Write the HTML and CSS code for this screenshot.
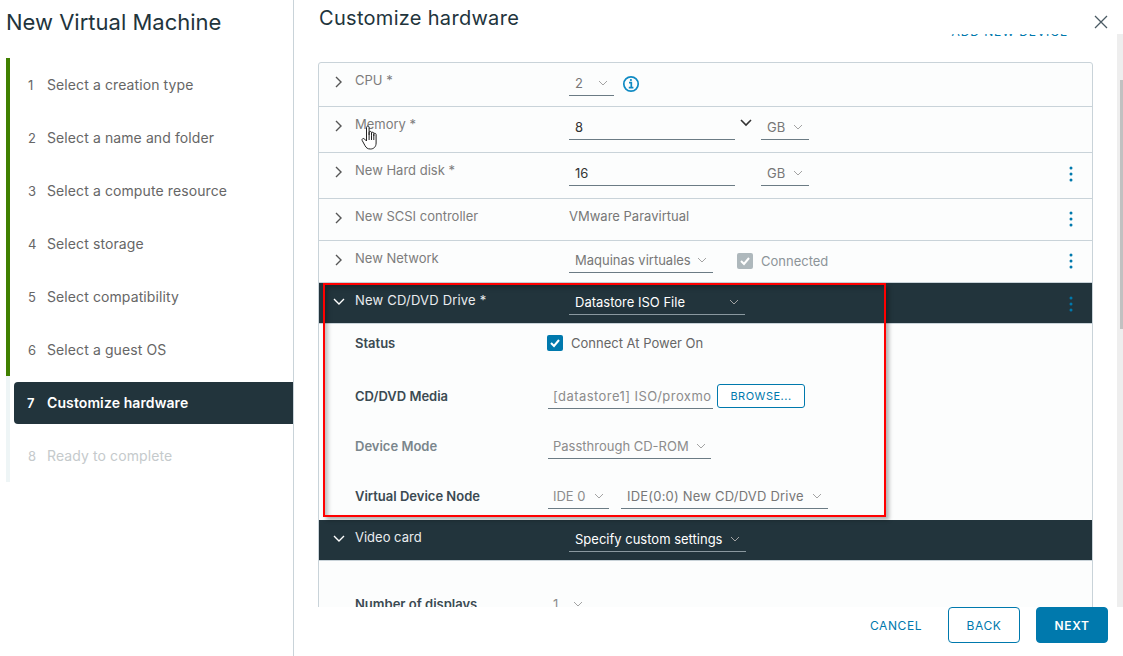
FILE: index.html
```html
<!DOCTYPE html>
<html>
<head>
  <meta charset="UTF-8">
  <title>New Virtual Machine</title>
  <link rel="stylesheet" href="styles.css">
</head>
<body>
<div class="app">

  <aside class="sidebar">
    <h1 class="wizard-title">New Virtual Machine</h1>
    <ol class="steps">
      <li class="step done"><span class="num">1</span>Select a creation type</li>
      <li class="step done"><span class="num">2</span>Select a name and folder</li>
      <li class="step done"><span class="num">3</span>Select a compute resource</li>
      <li class="step done"><span class="num">4</span>Select storage</li>
      <li class="step done"><span class="num">5</span>Select compatibility</li>
      <li class="step done"><span class="num">6</span>Select a guest OS</li>
      <li class="step active"><div class="pill"><span class="num">7</span>Customize hardware</div></li>
      <li class="step disabled"><span class="num">8</span>Ready to complete</li>
    </ol>
  </aside>

  <main class="main">
    <header class="header">
      <h2 class="page-title">Customize hardware</h2>
      <svg class="close" width="14" height="14" viewBox="0 0 14 14"><path d="M1 1l12 12M13 1L1 13" stroke="#4a5a63" stroke-width="1.3" fill="none"/></svg>
    </header>

    <div class="content">
      <div class="scroller">
        <div class="toolbar"><a class="add-link">ADD NEW DEVICE</a></div>
        <div class="table">

          <div class="row row-cpu">
            <svg class="chev" width="10" height="12" viewBox="0 0 10 12"><path d="M2 1l5 5-5 5" /></svg>
            <div class="label">CPU *</div>
            <div class="values">
              <div class="field w45"><span>2</span><svg class="caret" width="10" height="6" viewBox="0 0 10 6"><path d="M1 1l4 4 4-4" /></svg></div>
              <svg class="info" width="18" height="18" viewBox="0 0 18 18"><circle cx="9" cy="9" r="7.2" /><path d="M7 7.6h2.300v4.600M6.800 12.600h4.600" /><circle class="dot" cx="8.900" cy="5" r="1.100" /></svg>
            </div>
          </div>

          <div class="row">
            <svg class="chev" width="10" height="12" viewBox="0 0 10 12"><path d="M2 1l5 5-5 5" /></svg>
            <div class="label">Memory *</div>
            <div class="values">
              <div class="field w166 plain"><span>8</span></div>
              <svg class="spin" width="12" height="8" viewBox="0 0 12 8"><path d="M1 1l5 5 5-5" /></svg>
              <div class="field w48 gb"><span>GB</span><svg class="caret" width="10" height="6" viewBox="0 0 10 6"><path d="M1 1l4 4 4-4" /></svg></div>
            </div>
          </div>

          <div class="row">
            <svg class="chev" width="10" height="12" viewBox="0 0 10 12"><path d="M2 1l5 5-5 5" /></svg>
            <div class="label">New Hard disk *</div>
            <div class="values">
              <div class="field w166 plain"><span>16</span></div>
              <div class="field w48 gb nospin"><span>GB</span><svg class="caret" width="10" height="6" viewBox="0 0 10 6"><path d="M1 1l4 4 4-4" /></svg></div>
            </div>
            <svg class="kebab" width="4" height="16" viewBox="0 0 4 16"><circle cx="2" cy="2" r="1.500" /><circle cx="2" cy="8" r="1.500" /><circle cx="2" cy="14" r="1.500" /></svg>
          </div>

          <div class="row row-scsi">
            <svg class="chev" width="10" height="12" viewBox="0 0 10 12"><path d="M2 1l5 5-5 5" /></svg>
            <div class="label">New SCSI controller</div>
            <div class="values static">VMware Paravirtual</div>
            <svg class="kebab" width="4" height="16" viewBox="0 0 4 16"><circle cx="2" cy="2" r="1.500" /><circle cx="2" cy="8" r="1.500" /><circle cx="2" cy="14" r="1.500" /></svg>
          </div>

          <div class="row row-net">
            <svg class="chev" width="10" height="12" viewBox="0 0 10 12"><path d="M2 1l5 5-5 5" /></svg>
            <div class="label">New Network</div>
            <div class="values">
              <div class="field w144"><span>Maquinas virtuales</span><svg class="caret" width="10" height="6" viewBox="0 0 10 6"><path d="M1 1l4 4 4-4" /></svg></div>
              <span class="check grey"><svg width="12" height="10" viewBox="0 0 12 10"><path d="M2 5l3 3 5-6" /></svg></span>
              <span class="connected">Connected</span>
            </div>
            <svg class="kebab" width="4" height="16" viewBox="0 0 4 16"><circle cx="2" cy="2" r="1.500" /><circle cx="2" cy="8" r="1.500" /><circle cx="2" cy="14" r="1.500" /></svg>
          </div>

          <div class="row dark row-cd">
            <svg class="chev" width="12" height="10" viewBox="0 0 12 10"><path d="M1 2l5 5 5-5" /></svg>
            <div class="label">New CD/DVD Drive *</div>
            <div class="values">
              <div class="field w176"><span>Datastore ISO File</span><svg class="caret" width="10" height="6" viewBox="0 0 10 6"><path d="M1 1l4 4 4-4" /></svg></div>
            </div>
            <svg class="kebab" width="4" height="16" viewBox="0 0 4 16"><circle cx="2" cy="2" r="1.500" /><circle cx="2" cy="8" r="1.500" /><circle cx="2" cy="14" r="1.500" /></svg>
          </div>

          <div class="details">
            <div class="detail first">
              <div class="dlabel">Status</div>
              <span class="check status-check"><svg width="12" height="10" viewBox="0 0 12 10"><path d="M2 5l3 3 5-6" /></svg></span>
              <span class="connect-text">Connect At Power On</span>
            </div>
            <div class="detail">
              <div class="dlabel">CD/DVD Media</div>
              <div class="field w165 media iso"><span>[datastore1] ISO/proxmo</span></div>
              <button class="browse">BROWSE...</button>
            </div>
            <div class="detail">
              <div class="dlabel muted">Device Mode</div>
              <div class="field w163 media"><span>Passthrough CD-ROM</span><svg class="caret" width="10" height="6" viewBox="0 0 10 6"><path d="M1 1l4 4 4-4" /></svg></div>
            </div>
            <div class="detail">
              <div class="dlabel">Virtual Device Node</div>
              <div class="field w61 media"><span>IDE 0</span><svg class="caret" width="10" height="6" viewBox="0 0 10 6"><path d="M1 1l4 4 4-4" /></svg></div>
              <div class="field w207 node"><span>IDE(0:0) New CD/DVD Drive</span><svg class="caret" width="10" height="6" viewBox="0 0 10 6"><path d="M1 1l4 4 4-4" /></svg></div>
            </div>
          </div>

          <div class="row dark row-video">
            <svg class="chev" width="12" height="10" viewBox="0 0 12 10"><path d="M1 2l5 5 5-5" /></svg>
            <div class="label">Video card</div>
            <div class="values">
              <div class="field w177"><span>Specify custom settings</span><svg class="caret" width="10" height="6" viewBox="0 0 10 6"><path d="M1 1l4 4 4-4" /></svg></div>
            </div>
          </div>

          <div class="video-body">
            <div class="detail">
              <div class="dlabel">Number of displays</div>
              <div class="field w40 media noline"><span>1</span><svg class="caret" width="10" height="6" viewBox="0 0 10 6"><path d="M1 1l4 4 4-4" /></svg></div>
            </div>
          </div>
        </div>
      </div>
      <div class="scroll-track"><div class="scroll-thumb"></div></div>
    </div>

    <footer class="footer">
      <button class="btn link">CANCEL</button>
      <button class="btn outline">BACK</button>
      <button class="btn primary">NEXT</button>
    </footer>
  </main>

  <!-- annotation and mouse pointer, on top of the screenshot -->
  <div class="red-box"></div>
  <svg class="hand" width="18" height="25" viewBox="0 0 18 25">
    <path d="M5.500 16V2.600c0-2 2.600-2 2.600 0V10V7.600c0-1.600 2.400-1.600 2.400 0V10.500V8.400c0-1.600 2.300-1.600 2.300 0V11V9.400c0-1.500 2.300-1.500 2.300 0.200V18c0 3.800-2.400 6-5.600 6c-3 0-4.300-1.200-5.400-3.200L1.200 15.500c-.8-1.800 1.400-2.800 2.500-1.300z" fill="#fff" stroke="#222" stroke-width="1"/>
    <path d="M8.100 10v5M10.500 10.500V15M12.800 11v4" stroke="#222" stroke-width="1" fill="none"/>
  </svg>
</div>
</body>
</html>
```

FILE: styles.css
```css
* {
  box-sizing: border-box;
}
html, body {
  margin: 0;
  height: 100%;
  overflow: hidden;
}
body {
  background: #fff;
  color: #666;
  font-family: Inter, "Noto Sans", sans-serif;
  font-size: 13px;
}
.app {
  position: relative;
  display: flex;
  width: 1123px;
  height: 656px;
}

/* left side: wizard steps */
.sidebar {
  width: 294px;
  flex: none;
  border-right: 1px solid #c9d3d9;
}
.wizard-title {
  margin: 0;
  padding: 8px 0 0 6px;
  height: 58px;
  font-size: 22px;
  line-height: 28px;
  font-weight: 400;
  color: #22343c;
}
.steps {
  list-style: none;
  margin: 0 0 0 6px;
  padding: 0;
  font-size: 14px;
  letter-spacing: .1px;
}
.step {
  height: 53px;
  border-left: 4px solid #eef5f6;
  padding-left: 18px;
  display: flex;
  align-items: center;
}
.step.done {
  border-left-color: #408000;
}
.num {
  width: 19px;
  flex: none;
  font-size: 13px;
}
.step.disabled {
  color: #c5cacc;
}
.step.active {
  padding-left: 4px;
}
.pill {
  flex: 1;
  height: 42px;
  padding-left: 13px;
  background: #22343c;
  color: #fff;
  font-weight: 600;
  border-radius: 4px 0 0 4px;
  display: flex;
  align-items: center;
}
.pill .num {
  width: 20px;
}

/* right side */
.main {
  flex: 1;
  min-width: 0;
  display: flex;
  flex-direction: column;
}
.header {
  height: 34px;
  flex: none;
  padding: 4px 15px 0 25px;
  display: flex;
  justify-content: space-between;
}
.page-title {
  margin: 0;
  font-size: 20px;
  line-height: 28px;
  font-weight: 400;
  letter-spacing: .3px;
  color: #22343c;
}
.close {
  margin-top: 11px;
}
.content {
  flex: 1;
  min-height: 0;
  display: flex;
}
.scroller {
  flex: 1;
  min-width: 0;
  overflow: hidden;
  padding: 0 24px;
}
.toolbar {
  display: flow-root;
  height: 28px;
  text-align: right;
  padding-right: 25px;
}
.add-link {
  display: block;
  margin-top: -8px;
  line-height: 12px;
  font-size: 12px;
  letter-spacing: .9px;
  color: #0079ad;
}
.scroll-track {
  width: 6px;
  flex: none;
  background: #eee;
  padding: 46px 0 0 3px;
}
.scroll-thumb {
  height: 249px;
  background: #c1c1c1;
}
.table {
  border: 1px solid #c9d3d9;
  border-radius: 3px 3px 0 0;
  background: #fcfdfd;
}
.row {
  position: relative;
  display: flex;
  align-items: flex-start;
  height: 46px;
  padding-top: 8px;
  border-bottom: 1px solid #c9d3d9;
}
.row-cpu { height: 44px; }
.row-scsi { height: 42px; }
.row-net { height: 42px; padding-top: 7px; }
.row-cd { height: 41px; padding-top: 7px; }
.row-video { height: 41px; padding-top: 7px; }
.row-net .label,
.row-cd .label,
.row-video .label {
  margin-top: 1px;
}
.chev {
  flex: none;
  margin: 5px 0 0 15px;
  fill: none;
  stroke: #565656;
  stroke-width: 1.4;
}
.row-net .chev {
  margin-top: 6px;
}
.label {
  width: 214px;
  flex: none;
  margin-left: 11px;
  line-height: 18px;
  color: #7c7c7c;
}
.values {
  display: flex;
  align-items: center;
  color: #777;
}
.values.static {
  line-height: 18px;
}
.field {
  height: 25px;
  flex: none;
  display: flex;
  align-items: center;
  justify-content: space-between;
  padding: 0 6px;
  border-bottom: 1px solid #6b7b84;
  white-space: nowrap;
}
.caret {
  flex: none;
  fill: none;
  stroke: #a3a3a3;
  stroke-width: 1;
}
.values .plain { color: #333; }
.w40 { width: 40px; }
.w45 { width: 45px; }
.w48 { width: 48px; }
.w61 { width: 61px; }
.w144 { width: 144px; }
.w163 { width: 163px; }
.w165 { width: 165px; }
.w166 { width: 166px; }
.w176 { width: 176px; }
.w177 { width: 177px; }
.w207 { width: 207px; }
.info {
  margin-left: 8px;
  fill: none;
  stroke: #0f8ac3;
  stroke-width: 1.7;
}
.info .dot {
  fill: #0f8ac3;
  stroke: none;
}
.spin {
  margin: 4px 9px 0 5px;
  align-self: flex-start;
  fill: none;
  stroke: #333;
  stroke-width: 1.6;
}
.nospin {
  margin-left: 26px;
}
.kebab {
  position: absolute;
  right: 19px;
  top: 13px;
  fill: #0079ad;
}
.row-scsi .kebab,
.row-net .kebab {
  top: 12px;
}
.check {
  width: 16px;
  height: 16px;
  flex: none;
  border-radius: 2px;
  background: #0079ad;
  display: flex;
  align-items: center;
  justify-content: center;
}
.check svg {
  fill: none;
  stroke: #fff;
  stroke-width: 2;
}
.check.grey {
  background: #aeb8bc;
  margin-left: 24px;
}
.status-check {
  margin-left: -1px;
}
.connected {
  margin-left: 8px;
  color: #8c9499;
}

/* dark header rows */
.row.dark {
  background: #22343c;
  border-bottom-color: #c9d3d9;
}
.dark .label {
  margin-left: 10px;
  color: #e9ecef;
}
.row-cd .label {
  letter-spacing: .2px;
}
.dark .chev {
  stroke: #fff;
  margin: 7px 0 0 14px;
}
.dark .values {
  color: #fff;
}
.dark .field {
  border-bottom-color: #8a989f;
}

/* expanded content */
.details {
  display: flow-root;
  height: 196px;
  padding-left: 36px;
}
.detail {
  display: flex;
  align-items: center;
  height: 40px;
  margin-bottom: 10px;
}
.detail.first {
  margin-top: -1px;
  margin-bottom: 13px;
}
.dlabel {
  width: 193px;
  flex: none;
  font-weight: 600;
  color: #3b4a52;
}
.dlabel.muted {
  color: #7a868c;
}
.connect-text {
  margin-left: 8px;
}
.media {
  padding: 0 5px;
  color: #8c8c8c;
}
.iso {
  padding-right: 0;
  letter-spacing: .45px;
}
.node {
  margin-left: 12px;
  color: #777;
  letter-spacing: .2px;
}
.noline {
  border-bottom-color: transparent;
}
.browse {
  width: 88px;
  height: 24px;
  margin-left: 4px;
  padding: 0;
  background: #fff;
  border: 1px solid #0079ad;
  border-radius: 3px;
  color: #0079ad;
  font: 11px Inter, sans-serif;
  letter-spacing: .5px;
}
.video-body {
  height: 80px;
  padding: 23px 0 0 36px;
}

/* bottom buttons */
.footer {
  height: 49px;
  flex: none;
  padding-right: 15px;
  display: flex;
  justify-content: flex-end;
  gap: 16px;
}
.btn {
  width: 72px;
  height: 36px;
  padding: 0;
  border-radius: 4px;
  font: 12px Inter, sans-serif;
  letter-spacing: .6px;
  color: #0079ad;
  background: #fff;
  border: 1px solid #0079ad;
}
.btn.link {
  border: none;
}
.btn.primary {
  background: #0079ad;
  color: #fff;
  font-weight: 600;
}

/* things on top */
.red-box {
  position: absolute;
  left: 323px;
  top: 283px;
  width: 563px;
  height: 234px;
  border: 2px solid #f00;
  box-shadow: 3px 3px 4px rgba(0, 0, 0, .3), inset 3px 3px 4px rgba(0, 0, 0, .25);
}
.hand {
  position: absolute;
  left: 361px;
  top: 125px;
}
```
